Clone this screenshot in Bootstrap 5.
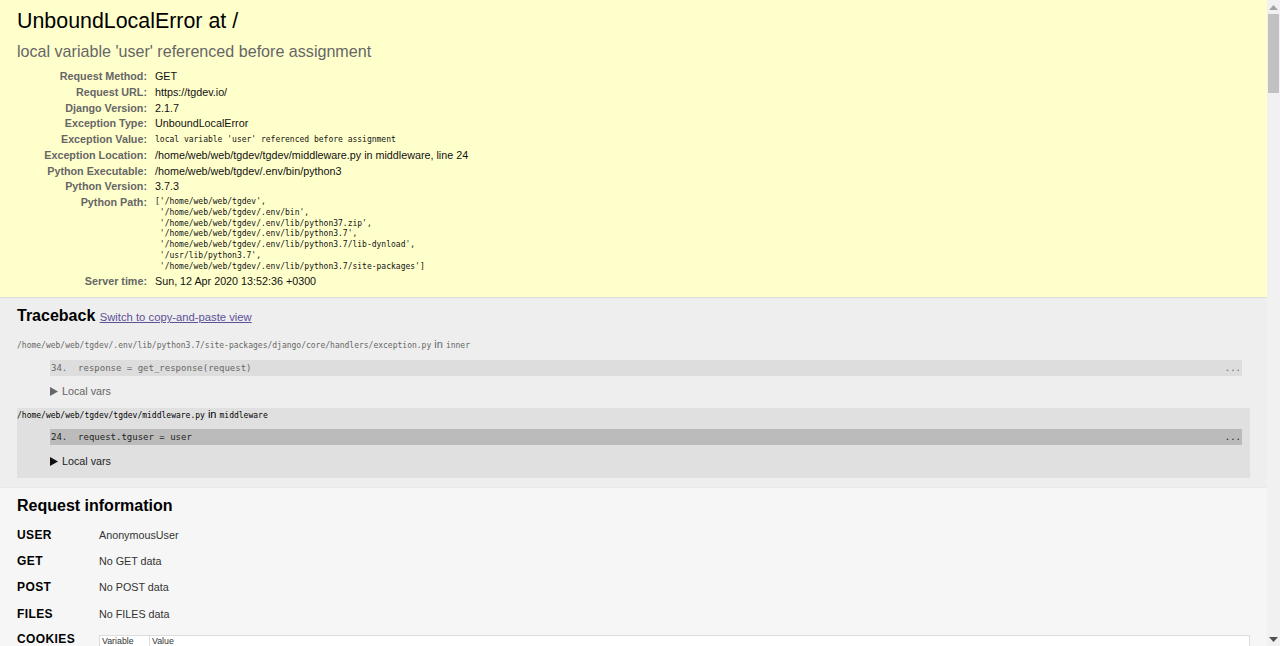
<!DOCTYPE html>
<html lang="en">
<head>
<meta charset="utf-8">
<title>UnboundLocalError at /</title>
<link href="https://cdn.jsdelivr.net/npm/bootstrap@5.3.0/dist/css/bootstrap.min.css" rel="stylesheet">
<style>
html,body{height:646px;overflow:hidden;margin:0}
body{font-family:"Liberation Sans",Arial,sans-serif;font-size:10.75px;color:#000;background:#f6f6f6;line-height:normal}
.pg-main{width:1267px;height:646px;overflow:hidden;flex:none}
.mono{font-family:"DejaVu Sans Mono",monospace;font-size:8px}
.err-sum{background:#ffc;border-bottom:1px solid #ddd;height:298px;padding:10px 17px 0}
.err-title{font-size:21.4px;font-weight:400;line-height:22px;margin:0;color:#000}
.err-sub{font-size:16.1px;font-weight:400;line-height:18px;margin:10px 0 0;color:#666}
.meta{margin-top:9px;border-collapse:collapse}
.meta th{width:138px;text-align:right;font-weight:700;color:#666;padding:0 8px 0 0;height:15.75px;vertical-align:top;line-height:15.75px}
.meta td{padding:0;line-height:15.75px;vertical-align:top;color:#111}
.path{margin:0;font-family:"DejaVu Sans Mono",monospace;font-size:8px;line-height:10.75px;padding-top:2px;padding-bottom:2px;overflow:visible;color:#111}
.tb{background:#eee;height:190px;padding:9px 17px 0 17px;border-bottom:1px solid #e8e8e8}
.sec-h{font-size:16px;font-weight:700;line-height:18px;margin:0;color:#000}
.sec-h a{font-size:11.25px;font-weight:400;color:#5c5097}
.file-line{font-size:11px;line-height:14px;color:#666;margin-top:11px}
.code-line{margin:7px 8px 0 33px;height:16px;line-height:16px;background:#ddd;color:#666;padding:0 1px;white-space:pre;font-family:"DejaVu Sans Mono",monospace;font-size:9px}
.vars-line{margin:7px 0 0 33px;font-size:10.75px;line-height:16px;color:#666}
.arrow{display:inline-block;margin-right:4px;vertical-align:-1px}
.frame-on{background:#e0e0e0;height:70px;margin-top:9px;color:#000}
.frame-on .file-line{margin-top:0;color:#000;line-height:13px}
.frame-on .code-line{background:#bbb;color:#222;margin:7px 8px 0 33px}
.frame-on .vars-line{color:#222;margin-top:8px}
.info{padding:9px 17px 0 17px}
.info-list{margin-top:6.5px}
.info-row{height:26.3px;align-items:center}
.info-k{width:82px;font-size:12px;font-weight:700;letter-spacing:.4px;color:#000;flex:none}
.info-v{font-size:10.75px;color:#333}
.cookie-k{padding-top:5px}
.cookie-t{flex:1;background:#fff;border:1px solid #ddd;border-bottom:0;margin-top:8px;height:11px;font-size:8.8px;color:#333}
.cookie-c{padding:0 2px;border-right:1px solid #ddd;width:50px;line-height:10px}
.cookie-d{padding:0 2px;line-height:10px}
.sbar{width:13px;height:646px;background:#f1f1f1;flex:none}
.sbar-up,.sbar-dn{height:14px}
.sbar-thumb{height:79px;background:#c1c1c1;margin:0 1px}
.sbar-space{flex:1}
</style>
</head>
<body>
<div class="d-flex">
<div class="pg-main">
  <div class="err-sum">
    <h1 class="err-title">UnboundLocalError at /</h1>
    <div class="err-sub">local variable 'user' referenced before assignment</div>
    <table class="meta">
      <tr><th>Request Method:</th><td>GET</td></tr>
      <tr><th>Request URL:</th><td>https://tgdev.io/</td></tr>
      <tr><th>Django Version:</th><td>2.1.7</td></tr>
      <tr><th>Exception Type:</th><td>UnboundLocalError</td></tr>
      <tr><th>Exception Value:</th><td class="mono">local variable 'user' referenced before assignment</td></tr>
      <tr><th>Exception Location:</th><td>/home/web/web/tgdev/tgdev/middleware.py in middleware, line 24</td></tr>
      <tr><th>Python Executable:</th><td>/home/web/web/tgdev/.env/bin/python3</td></tr>
      <tr><th>Python Version:</th><td>3.7.3</td></tr>
      <tr><th>Python Path:</th><td><pre class="path">['/home/web/web/tgdev',
 '/home/web/web/tgdev/.env/bin',
 '/home/web/web/tgdev/.env/lib/python37.zip',
 '/home/web/web/tgdev/.env/lib/python3.7',
 '/home/web/web/tgdev/.env/lib/python3.7/lib-dynload',
 '/usr/lib/python3.7',
 '/home/web/web/tgdev/.env/lib/python3.7/site-packages']</pre></td></tr>
      <tr><th>Server time:</th><td>Sun, 12 Apr 2020 13:52:36 +0300</td></tr>
    </table>
  </div>
  <div class="tb">
    <h2 class="sec-h">Traceback <a href="#">Switch to copy-and-paste view</a></h2>
    <div class="file-line"><span class="mono">/home/web/web/tgdev/.env/lib/python3.7/site-packages/django/core/handlers/exception.py</span> in <span class="mono">inner</span></div>
    <div class="code-line d-flex justify-content-between"><span>34.  response = get_response(request)</span><span>...</span></div>
    <div class="vars-line"><svg class="arrow" width="8" height="9" viewBox="0 0 8 9"><path d="M0 0 8 4.500 0 9z" fill="#666"/></svg>Local vars</div>
    <div class="frame-on">
      <div class="file-line"><span class="mono">/home/web/web/tgdev/tgdev/middleware.py</span> in <span class="mono">middleware</span></div>
      <div class="code-line d-flex justify-content-between"><span>24.  request.tguser = user</span><span>...</span></div>
      <div class="vars-line"><svg class="arrow" width="8" height="9" viewBox="0 0 8 9"><path d="M0 0 8 4.500 0 9z" fill="#111"/></svg>Local vars</div>
    </div>
  </div>
  <div class="info">
    <h2 class="sec-h">Request information</h2>
    <div class="info-list">
      <div class="d-flex info-row"><div class="info-k">USER</div><div class="info-v">AnonymousUser</div></div>
      <div class="d-flex info-row"><div class="info-k">GET</div><div class="info-v">No GET data</div></div>
      <div class="d-flex info-row"><div class="info-k">POST</div><div class="info-v">No POST data</div></div>
      <div class="d-flex info-row"><div class="info-k">FILES</div><div class="info-v">No FILES data</div></div>
      <div class="d-flex info-row align-items-start"><div class="info-k cookie-k">COOKIES</div><div class="cookie-t d-flex"><div class="cookie-c">Variable</div><div class="cookie-d">Value</div></div></div>
    </div>
  </div>
</div>
<div class="sbar d-flex flex-column">
  <div class="sbar-up d-flex align-items-center justify-content-center"><svg width="9" height="5" viewBox="0 0 9 5"><path d="M4.500 0 9 5H0z" fill="#a3a3a3"/></svg></div>
  <div class="sbar-thumb"></div>
  <div class="sbar-space"></div>
  <div class="sbar-dn d-flex align-items-center justify-content-center"><svg width="9" height="5" viewBox="0 0 9 5"><path d="M0 0h9L4.500 5z" fill="#505050"/></svg></div>
</div>
</div>
</body>
</html>
